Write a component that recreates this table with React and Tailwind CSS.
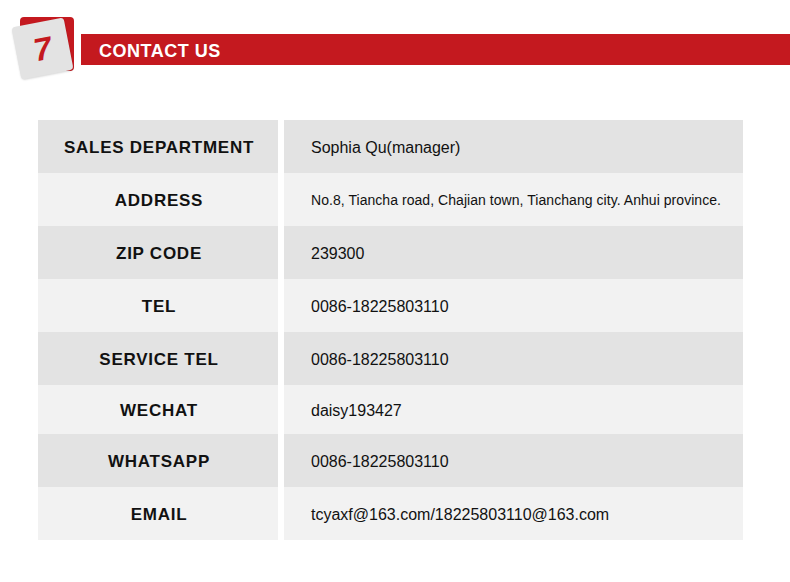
import React from 'react';

const rows = [
  { label: 'SALES DEPARTMENT', value: 'Sophia Qu(manager)', tone: 'dark' },
  { label: 'ADDRESS', value: 'No.8, Tiancha road, Chajian town, Tianchang city. Anhui province.', tone: 'light', small: true },
  { label: 'ZIP CODE', value: '239300', tone: 'dark' },
  { label: 'TEL', value: '0086-18225803110', tone: 'light' },
  { label: 'SERVICE TEL', value: '0086-18225803110', tone: 'dark' },
  { label: 'WECHAT', value: 'daisy193427', tone: 'light', short: true },
  { label: 'WHATSAPP', value: '0086-18225803110', tone: 'dark' },
  { label: 'EMAIL', value: 'tcyaxf@163.com/18225803110@163.com', tone: 'light' },
];

function SectionHeader() {
  return (
    <div className="flex items-start h-[88px]">
      <div className="relative w-[81px] h-[88px] shrink-0">
        <div className="absolute left-[20px] top-[17px] w-[54px] h-[54px] rounded-[4px] bg-[#c4191f]" />
        <div className="absolute left-[16px] top-[22px] w-[53px] h-[53px] rounded-[4px] bg-[#e3e3e3] rotate-[-11deg] flex items-center justify-center shadow-[0_1px_2px_rgba(0,0,0,0.15)]">
          <span className="text-[#c4191f] text-[32px] font-bold italic leading-none">7</span>
        </div>
      </div>
      <div className="flex-1 mt-[34px] h-[31px] bg-[#c4191f] flex items-center pl-[18px] pt-[3px]">
        <span className="text-white font-bold text-[18px] tracking-[0.5px]">CONTACT US</span>
      </div>
    </div>
  );
}

export default function App() {
  return (
    <div className="w-[790px] h-[582px] bg-white overflow-hidden" style={{ fontFamily: '"Liberation Sans", Arial, sans-serif' }}>
      <SectionHeader />
      <div className="mt-[32px] ml-[38px] w-[705px] flex flex-col">
        {rows.map((row) => {
          const bg = row.tone === 'dark' ? 'bg-[#e3e3e3]' : 'bg-[#f2f2f2]';
          return (
            <div key={row.label} className={`flex gap-[6px] ${row.short ? 'h-[49px]' : 'h-[53px]'}`}>
              <div className={`w-[240px] flex items-center justify-center pt-[2px] pl-[2px] ${bg}`}>
                <span className="font-bold text-[17px] text-[#111] tracking-[0.75px]">{row.label}</span>
              </div>
              <div className={`flex-1 flex items-center pl-[27px] pt-[2px] ${bg}`}>
                <span className={`text-[#111] ${row.small ? 'text-[14px] tracking-[0.05px]' : 'text-[16px]'}`}>{row.value}</span>
              </div>
            </div>
          );
        })}
      </div>
    </div>
  );
}
